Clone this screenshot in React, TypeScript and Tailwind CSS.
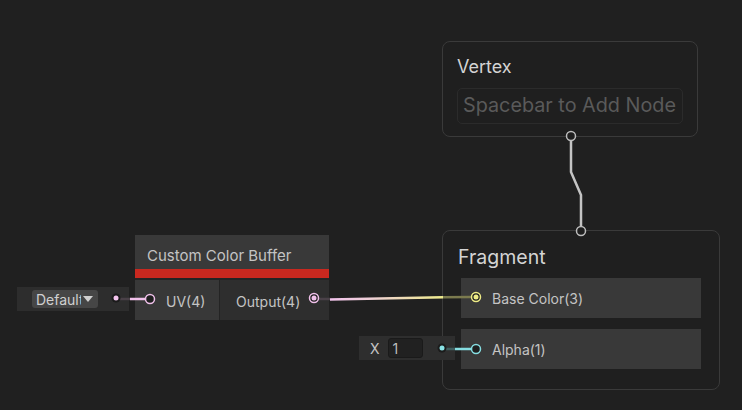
import React from 'react';

const font = { fontFamily: 'Inter, "Noto Sans", sans-serif' };

// port circle: connected ports get a filled centre dot
const Port = ({ x, y, color, filled }: { x: number; y: number; color: string; filled?: boolean }) => (
  <g>
    <circle cx={x} cy={y} r={4.5} fill="#1f1f1f" stroke={color} strokeWidth={1.5} />
    {filled && <circle cx={x} cy={y} r={2.5} fill={color} />}
  </g>
);

const Dot = ({ x, y, color }: { x: number; y: number; color: string }) => (
  <g>
    <circle cx={x} cy={y} r={4.5} fill="#1b1b1b" />
    <circle cx={x} cy={y} r={2.5} fill={color} />
  </g>
);

const Wires = () => (
  <svg className="absolute inset-0 pointer-events-none" width={742} height={410}>
    <defs>
      <linearGradient id="pinkYellow" x1="330" y1="0" x2="443" y2="0" gradientUnits="userSpaceOnUse">
        <stop offset="0" stopColor="#f2c3ec" />
        <stop offset="0.35" stopColor="#efcfd8" />
        <stop offset="1" stopColor="#eeeb8c" />
      </linearGradient>
    </defs>

    {/* vertex -> fragment */}
    <polyline points="571,141 571,172 581,195 581,227" fill="none" stroke="#c4c4c4" strokeWidth={2.5} />
    <Port x={571} y={136} color="#bdbdbd" />
    <Port x={581} y={231} color="#bdbdbd" />

    {/* Default -> UV */}
    <line x1={120} y1={299} x2={130} y2={299} stroke="#4a4148" strokeWidth={2.5} />
    <line x1={130} y1={299} x2={146} y2={299} stroke="#f0c0ea" strokeWidth={2.5} />
    <Dot x={116} y={298} color="#f3c4ee" />
    <Port x={150} y={299} color="#f0c0ea" />

    {/* Output -> Base Color */}
    <line x1={319} y1={299} x2={330} y2={299} stroke="#4a4148" strokeWidth={2.5} />
    <line x1={330} y1={299.5} x2={443} y2={297.2} stroke="url(#pinkYellow)" strokeWidth={2.5} />
    <line x1={443} y1={297.2} x2={471} y2={297} stroke="#7b7a4e" strokeWidth={2.5} />
    <Port x={314} y={298} color="#f0c0ea" filled />
    <Port x={476} y={297} color="#eeeb86" filled />

    {/* X -> Alpha */}
    <line x1={446} y1={349} x2={455} y2={349} stroke="#3f5d5e" strokeWidth={2.5} />
    <line x1={455} y1={349} x2={471} y2={349} stroke="#86dee2" strokeWidth={2.5} />
    <Dot x={442} y={348} color="#8ae3e6" />
    <Port x={476} y={349} color="#86dee2" />
  </svg>
);

export default function App() {
  return (
    <div className="relative w-[742px] h-[410px] overflow-hidden bg-[#202020]" style={font}>
      {/* Vertex context */}
      <div className="absolute left-[442px] top-[41px] w-[256px] h-[96px] rounded-[8px] border border-[#3a3a3a] bg-[#1f1f1f] px-[14px] pt-[14px]">
        <div className="text-[18px] leading-[22px] text-[#d4d4d4]">Vertex</div>
        <div className="mt-[10px] h-[36px] rounded-[5px] border border-[#2b2b2b] px-[5px] flex items-center text-[19.8px] text-[#5a5a5a] whitespace-nowrap overflow-hidden">
          Spacebar to Add Node
        </div>
      </div>

      {/* Fragment context */}
      <div className="absolute left-[442px] top-[230px] w-[278px] h-[160px] rounded-[8px] border border-[#3a3a3a] bg-[#1f1f1f] pl-[15px] pt-[14px]">
        <div className="text-[19.5px] leading-[24px] text-[#d4d4d4]">Fragment</div>
        <div className="mt-[9px] ml-[3px] w-[240px] flex flex-col gap-[11px]">
          <div className="h-[40px] bg-[#393939] flex items-center pl-[31px] text-[14px] text-[#c4c4c4]">Base Color(3)</div>
          <div className="h-[40px] bg-[#393939] flex items-center pl-[31px] text-[14px] text-[#c4c4c4]">Alpha(1)</div>
        </div>
      </div>

      {/* Custom Color Buffer node */}
      <div className="absolute left-[135px] top-[235px] w-[194px] flex flex-col">
        <div className="h-[34px] bg-[#393939] flex items-center pl-[12px] pt-[8px] text-[15px] text-[#c4c4c4] whitespace-nowrap">
          Custom Color Buffer
        </div>
        <div className="h-[9px] bg-[#c9281f]" />
        <div className="h-[2px] bg-[#242424]" />
        <div className="h-[40px] flex text-[14px] text-[#c4c4c4]">
          <div className="w-[84px] bg-[#383838] flex items-center pl-[31px] pt-[2px]">UV(4)</div>
          <div className="w-[1px] bg-[#242424]" />
          <div className="flex-1 bg-[#2e2e2e] flex items-center pl-[16px] pt-[2px]">Output(4)</div>
        </div>
      </div>

      {/* Default dropdown input */}
      <div className="absolute left-[17px] top-[287px] w-[112px] h-[24px] bg-[#2d2d2d] flex items-center pl-[15px]">
        <div className="w-[66px] h-[18px] rounded-[3px] bg-[#464646] flex items-center pl-[4px] text-[14px] text-[#d0d0d0] overflow-hidden whitespace-nowrap">
          <span className="w-[45px] overflow-hidden">Default</span>
          <svg width="10" height="6" viewBox="0 0 10 6" className="ml-[2px]">
            <path d="M0 0 L10 0 L5 6 Z" fill="#d0d0d0" />
          </svg>
        </div>
      </div>

      {/* X float input */}
      <div className="absolute left-[359px] top-[336px] w-[96px] h-[24px] bg-[#2e2e2e] flex items-center pl-[11px] text-[14px] text-[#c4c4c4]">
        <span>X</span>
        <div className="ml-[8px] w-[35px] h-[20px] rounded-[3px] bg-[#212121] border border-[#1a1a1a] flex items-center pl-[4px] text-[#bdbdbd]">1</div>
      </div>

      <Wires />
    </div>
  );
}
